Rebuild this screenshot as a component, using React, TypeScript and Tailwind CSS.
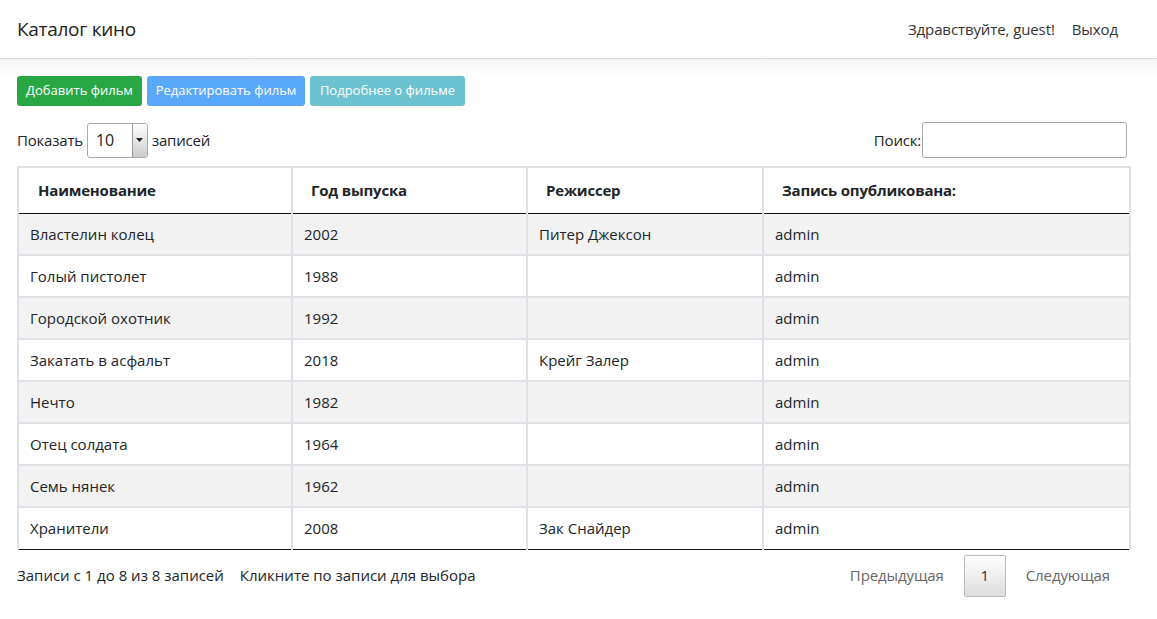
import React from "react";

const films = [
    ["Властелин колец", "2002", "Питер Джексон", "admin"],
    ["Голый пистолет", "1988", "", "admin"],
    ["Городской охотник", "1992", "", "admin"],
    ["Закатать в асфальт", "2018", "Крейг Залер", "admin"],
    ["Нечто", "1982", "", "admin"],
    ["Отец солдата", "1964", "", "admin"],
    ["Семь нянек", "1962", "", "admin"],
    ["Хранители", "2008", "Зак Снайдер", "admin"],
];

function App() {
    return (
        <div className="min-h-[619px] bg-white text-[#212529]" style={{ fontFamily: '"Open Sans", "Noto Sans", sans-serif' }}>
            <nav className="h-[59px] border-b border-[#dcdce4] flex items-center justify-between pl-[17px] pr-[39px]">
                <span className="text-[19px] text-[#222] tracking-[-0.3px]">Каталог кино</span>
                <div className="flex items-center gap-[17px] text-[15px] text-[#333] tracking-[-0.1px]">
                    <span>Здравствуйте, guest!</span>
                    <span>Выход</span>
                </div>
            </nav>
            <div className="h-[17px] bg-gradient-to-b from-[#f4f4f6] to-white" />
            <div className="px-[17px]">
                <div className="flex gap-[5px] text-[13px] text-white">
                    <button className="h-[30px] w-[125px] rounded-[3px] bg-[#28a745]">Добавить фильм</button>
                    <button className="h-[30px] w-[158px] rounded-[3px] bg-[#5aa8fb]">Редактировать фильм</button>
                    <button className="h-[30px] w-[155px] rounded-[3px] bg-[#6bc2d1]">Подробнее о фильме</button>
                </div>
                <div className="mt-[16px] flex items-center justify-between text-[15px] tracking-[-0.2px]">
                    <div className="flex items-center gap-[4px]">
                        <span>Показать</span>
                        <div className="flex h-[35px] w-[61px] rounded-[3px] border border-[#aaa] overflow-hidden">
                            <span className="flex-1 pl-[8px] flex items-center text-[16px]">10</span>
                            <span className="w-[15px] border-l border-[#999] bg-gradient-to-b from-white to-[#ccc] flex items-center justify-center">
                                <svg width="7" height="4" viewBox="0 0 7 4"><path d="M0 0h7L3.5 4z" fill="#222" /></svg>
                            </span>
                        </div>
                        <span>записей</span>
                    </div>
                    <div className="flex items-center gap-[1px] pr-[13px]">
                        <span>Поиск:</span>
                        <div className="h-[36px] w-[205px] rounded-[3px] border border-[#aaa]" />
                    </div>
                </div>
                <table className="mt-[8px] w-[1114px] border-collapse text-[15px]">
                    <thead>
                        <tr className="h-[46px] border-2 border-b-0 border-[#dee2e6]">
                            <th className="w-[274px] text-left font-bold pl-[19px] border-r-2 border-[#dee2e6] tracking-[-0.2px]">Наименование</th>
                            <th className="w-[235px] text-left font-bold pl-[18px] border-r-2 border-[#dee2e6] tracking-[-0.2px]">Год выпуска</th>
                            <th className="w-[236px] text-left font-bold pl-[18px] border-r-2 border-[#dee2e6] tracking-[-0.2px]">Режиссер</th>
                            <th className="text-left font-bold pl-[18px] tracking-[-0.2px]">Запись опубликована:</th>
                        </tr>
                    </thead>
                    <tbody className="border-t-[1px] border-t-[#111] border-b-[1px] border-b-[#111]">
                        {films.map((f, i) => (
                            <tr key={i} className={"h-[42px] " + (i % 2 === 0 ? "bg-[#f2f2f2]" : "bg-white")}>
                                {f.map((c, j) => (
                                    <td key={j} className={"pl-[11px] border-x-2 border-[#dee2e6] " + (i < films.length - 1 ? "border-b-2" : "")}>{c}</td>
                                ))}
                            </tr>
                        ))}
                    </tbody>
                </table>
                <div className="mt-[5px] flex items-center justify-between text-[15px]">
                    <div className="flex gap-[16px]">
                        <span>Записи с 1 до 8 из 8 записей</span>
                        <span>Кликните по записи для выбора</span>
                    </div>
                    <div className="flex items-center text-[#666] pr-[10px] tracking-[-0.1px]">
                        <span className="px-[20px]">Предыдущая</span>
                        <span className="h-[42px] w-[42px] flex items-center justify-center rounded-[2px] border border-[#bbb] bg-gradient-to-b from-white to-[#ddd] text-[#333]">1</span>
                        <span className="px-[20px]">Следующая</span>
                    </div>
                </div>
            </div>
        </div>
    );
}

export default App;
